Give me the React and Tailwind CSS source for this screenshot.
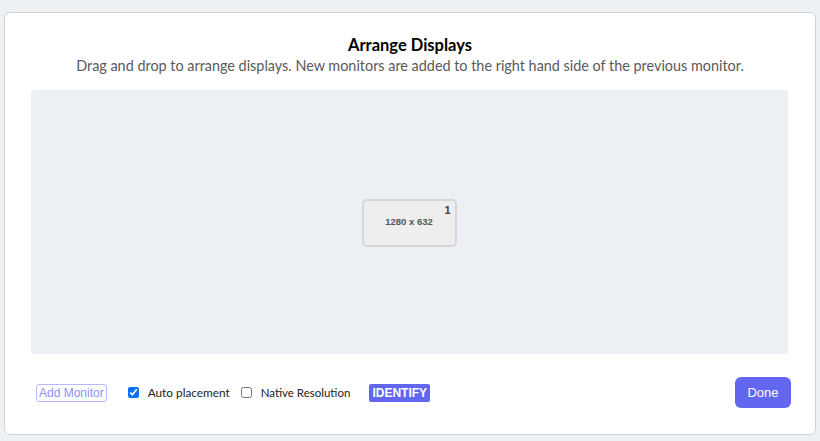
export default function App() {
  return (
    <div className="w-[820px] h-[441px] bg-[#eef1f4] pt-[12px] px-[4px] overflow-hidden">
      <div className="h-[423px] bg-white border border-[#cfd3d8] rounded-[6px] px-[26px] flex flex-col" style={{ fontFamily: 'Lato, "Noto Sans", sans-serif' }}>
        <h2 className="mt-[22px] text-center text-[16.5px] font-bold text-black leading-[20px]">Arrange Displays</h2>
        <p className="mt-[2px] text-center text-[14.4px] text-[#5a5a5a] leading-[18px]">
          Drag and drop to arrange displays. New monitors are added to the right hand side of the previous monitor.
        </p>
        <div className="mt-[15px] h-[264px] w-[757px] bg-[#ecf0f4] rounded-[3px] flex items-center justify-center">
          <div className="relative w-[95px] h-[48px] bg-[#eeeeee] border-2 border-[#d6d6d6] rounded-[5px] flex items-center justify-center mt-[1px] ml-[-1px]" style={{ fontFamily: '"Liberation Sans", Arial, sans-serif' }}>
            <span className="text-[9.5px] font-bold text-[#555]">1280 x 632</span>
            <span className="absolute top-[1px] right-[4px] text-[11px] font-bold text-[#444]">1</span>
          </div>
        </div>
        <div className="mt-[23px] flex items-center">
          <button className="ml-[5px] h-[18px] px-[2px] border border-[#b7b9fb] rounded-[3px] text-[12px] text-[#8d90f5] leading-[16px]" style={{ fontFamily: '"Liberation Sans", Arial, sans-serif' }}>
            Add Monitor
          </button>
          <label className="ml-[21px] flex items-center text-[11.8px] text-[#222]">
            <input type="checkbox" defaultChecked className="w-[11px] h-[11px] m-0 accent-[#0b6ff2]" />
            <span className="ml-[9px]">Auto placement</span>
          </label>
          <label className="ml-[11px] flex items-center text-[11.5px] text-[#222]">
            <input type="checkbox" className="w-[11px] h-[11px] m-0" />
            <span className="ml-[9px]">Native Resolution</span>
          </label>
          <button className="ml-[19px] h-[18px] px-[3px] bg-[#6366f1] rounded-[2px] text-[12px] font-bold text-white leading-[18px]" style={{ fontFamily: '"Liberation Sans", Arial, sans-serif' }}>
            IDENTIFY
          </button>
          <button className="ml-auto mr-[-2px] w-[56px] h-[31px] bg-[#6366f1] rounded-[6px] text-[13px] text-white" style={{ fontFamily: '"Liberation Sans", Arial, sans-serif' }}>
            Done
          </button>
        </div>
      </div>
    </div>
  );
}
